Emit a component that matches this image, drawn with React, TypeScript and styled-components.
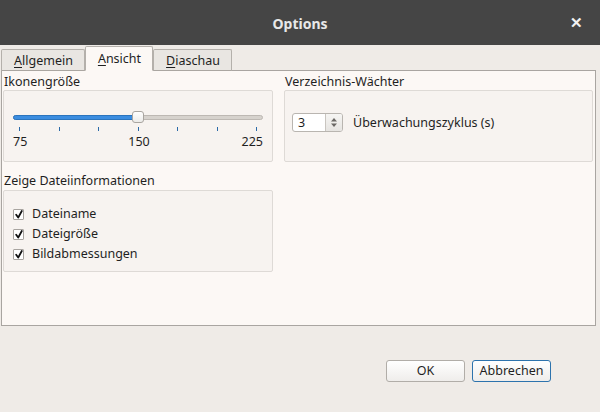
import React from "react";
import styled, { createGlobalStyle } from "styled-components";

const Global = createGlobalStyle`
  html, body { margin: 0; padding: 0; }
  body { background: #efebe7; font-family: "Noto Sans", "Open Sans", sans-serif; color: #1f1f1f; }
`;

const Window = styled.div`
  width: 600px;
  height: 412px;
  background: #efebe7;
  display: flex;
  flex-direction: column;
  overflow: hidden;
  font-size: 12.5px;
`;

const TitleBar = styled.div`
  height: 45px;
  flex: none;
  background: #454545;
  display: flex;
  align-items: center;
  justify-content: center;
  position: relative;
`;

const Title = styled.div`
  color: #e8e8e8;
  font-weight: bold;
  font-size: 14px;
  margin-top: 1px;
`;

const Close = styled.div`
  position: absolute;
  right: 17px;
  top: 13px;
  color: #f2f2f2;
  font-size: 15px;
  font-weight: bold;
  line-height: 18px;
`;

const Body = styled.div`
  padding: 1px 4px 0 1px;
  display: flex;
  flex-direction: column;
`;

const TabBar = styled.div`
  display: flex;
  align-items: flex-end;
  height: 25px;
  position: relative;
  z-index: 1;
  margin-bottom: -1px;
`;

const Tab = styled.div<{ $active?: boolean }>`
  height: ${(p) => (p.$active ? 25 : 22)}px;
  box-sizing: border-box;
  padding: 0 11px 0 12px;
  padding-top: ${(p) => (p.$active ? 0 : 2)}px;
  display: flex;
  align-items: center;
  background: ${(p) => (p.$active ? "#fcf8f5" : "#e9e6e2")};
  border: 1px solid #b4b0ab;
  border-bottom: ${(p) => (p.$active ? "1px solid #fcf8f5" : "1px solid #aaa6a1")};
  border-radius: 2px 2px 0 0;
  line-height: 16px;
`;

const U = styled.span`
  text-decoration: underline;
  text-underline-offset: 2px;
`;

const Panel = styled.div`
  height: 256px;
  box-sizing: border-box;
  background: #fcf8f5;
  border: 1px solid #a9a5a1;
  padding: 3px 3px 0 1px;
  display: grid;
  grid-template-columns: 270px 309px;
  grid-template-rows: auto auto;
  column-gap: 11px;
  row-gap: 11px;
  align-content: start;
`;

const Section = styled.div`
  display: flex;
  flex-direction: column;
`;

const Legend = styled.div<{ $h?: number }>`
  line-height: 16px;
  margin-left: 1px;
  height: ${(p) => p.$h ?? 16}px;
`;

const GroupBox = styled.div<{ $h: number }>`
  height: ${(p) => p.$h}px;
  box-sizing: border-box;
  background: #f7f3f0;
  border: 1px solid #dedad6;
  border-radius: 2px;
  position: relative;
`;

const SliderArea = styled.div`
  position: relative;
  margin: 20px 9px 0 9px;
  height: 50px;
`;

const Track = styled.div`
  position: absolute;
  left: 0;
  right: 0;
  top: 4px;
  height: 3px;
  background: #d6d2cd;
  border: 1px solid #bdb8b3;
  border-radius: 3px;
`;

const Fill = styled.div`
  position: absolute;
  left: 0;
  top: 4px;
  height: 3px;
  background: #3b8de0;
  border: 1px solid #2b74bd;
  border-radius: 3px;
`;

const Handle = styled.div`
  position: absolute;
  top: 0px;
  width: 12px;
  height: 12px;
  box-sizing: border-box;
  border: 1px solid #a9a5a0;
  border-radius: 3px;
  background: linear-gradient(#ffffff, #ecebe9);
`;

const Tick = styled.div`
  position: absolute;
  top: 16px;
  width: 1px;
  height: 4px;
  background: #2c6aa8;
`;

const TickLabel = styled.div<{ $align: "left" | "center" | "right" }>`
  position: absolute;
  top: 23px;
  line-height: 16px;
  transform: ${(p) =>
    p.$align === "center" ? "translateX(-50%)" : p.$align === "right" ? "translateX(-100%)" : "none"};
`;

const SpinRow = styled.div`
  display: flex;
  align-items: center;
  margin: 22px 0 0 7px;
  gap: 10px;
`;

const SpinBox = styled.div`
  width: 51px;
  height: 19px;
  box-sizing: border-box;
  border: 1px solid #b9b5b0;
  border-radius: 3px;
  background: #ffffff;
  display: flex;
`;

const SpinValue = styled.div`
  flex: 1;
  padding-left: 5px;
  line-height: 17px;
`;

const SpinButtons = styled.div`
  width: 16px;
  border-left: 1px solid #c9c5c0;
  background: linear-gradient(#f6f5f3, #e6e4e1);
  border-radius: 0 2px 2px 0;
  display: flex;
  align-items: center;
  justify-content: center;
`;

const CheckList = styled.div`
  display: flex;
  flex-direction: column;
  gap: 4px;
  padding: 15px 0 0 9px;
`;

const CheckRow = styled.div`
  display: flex;
  align-items: center;
  gap: 8px;
  line-height: 16px;
`;

const CheckBox = styled.div`
  width: 11px;
  height: 11px;
  box-sizing: border-box;
  border: 1px solid #a8a4a0;
  border-radius: 1px;
  background: #ffffff;
  display: flex;
  align-items: center;
  justify-content: center;
`;

const Footer = styled.div`
  display: flex;
  justify-content: flex-end;
  gap: 7px;
  padding: 34px 45px 0 0;
`;

const Button = styled.div<{ $default?: boolean }>`
  width: 79px;
  height: 22px;
  box-sizing: border-box;
  border: 1px solid ${(p) => (p.$default ? "#2d73ad" : "#b1ada8")};
  border-radius: 3px;
  background: linear-gradient(#ffffff, #efedeb);
  display: flex;
  align-items: center;
  justify-content: center;
  line-height: 16px;
`;

const Check = () => (
  <svg width="8" height="9" viewBox="0 0 8 9">
    <path d="M1.2 4.8 L3.2 7.6 L6.8 1" stroke="#111" strokeWidth="1.8" fill="none" strokeLinecap="round" strokeLinejoin="round" />
  </svg>
);

const Arrows = () => (
  <svg width="8" height="11" viewBox="0 0 8 11">
    <path d="M1 4.5 L4 1 L7 4.5 Z" fill="#6b6865" />
    <path d="M1 6.5 L4 10 L7 6.5 Z" fill="#6b6865" />
  </svg>
);

const ticks = [0, 1, 2, 3, 4, 5, 6];

export default function App() {
  const trackW = 249;
  const tickX = (i: number) => 6 + Math.round((i * (trackW - 12)) / 6);
  return (
    <Window>
      <Global />
      <TitleBar>
        <Title>Options</Title>
        <Close>✕</Close>
      </TitleBar>
      <Body>
        <TabBar>
          <Tab>
            <span><U>A</U>llgemein</span>
          </Tab>
          <Tab $active>
            <span><U>A</U>nsicht</span>
          </Tab>
          <Tab>
            <span><U>D</U>iaschau</span>
          </Tab>
        </TabBar>
        <Panel>
          <Section>
            <Legend>Ikonengröße</Legend>
            <GroupBox $h={72}>
              <SliderArea>
                <Track />
                <Fill style={{ width: tickX(3) - 2 }} />
                <Handle style={{ left: tickX(3) - 6 }} />
                {ticks.map((i) => (
                  <Tick key={i} style={{ left: tickX(i) }} />
                ))}
                <TickLabel $align="left" style={{ left: 0 }}>75</TickLabel>
                <TickLabel $align="center" style={{ left: tickX(3) + 1 }}>150</TickLabel>
                <TickLabel $align="right" style={{ left: trackW + 1 }}>225</TickLabel>
              </SliderArea>
            </GroupBox>
          </Section>
          <Section>
            <Legend>Verzeichnis-Wächter</Legend>
            <GroupBox $h={72}>
              <SpinRow>
                <SpinBox>
                  <SpinValue>3</SpinValue>
                  <SpinButtons>
                    <Arrows />
                  </SpinButtons>
                </SpinBox>
                <span>Überwachungszyklus (s)</span>
              </SpinRow>
            </GroupBox>
          </Section>
          <Section>
            <Legend $h={17}>Zeige Dateiinformationen</Legend>
            <GroupBox $h={82}>
              <CheckList>
                {["Dateiname", "Dateigröße", "Bildabmessungen"].map((t) => (
                  <CheckRow key={t}>
                    <CheckBox>
                      <Check />
                    </CheckBox>
                    <span>{t}</span>
                  </CheckRow>
                ))}
              </CheckList>
            </GroupBox>
          </Section>
        </Panel>
        <Footer>
          <Button>OK</Button>
          <Button $default>Abbrechen</Button>
        </Footer>
      </Body>
    </Window>
  );
}
